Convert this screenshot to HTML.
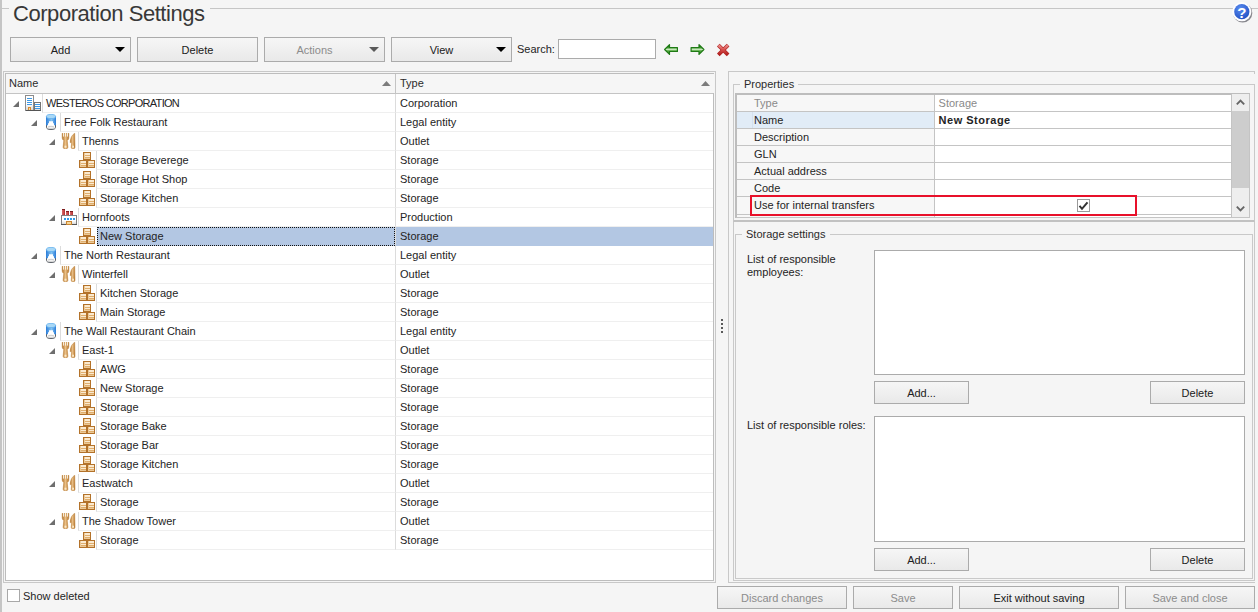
<!DOCTYPE html>
<html lang="en"><head><meta charset="utf-8"><title>Corporation Settings</title>
<style>
*{box-sizing:border-box;margin:0;padding:0}
html,body{width:1258px;height:612px;overflow:hidden}
body{position:relative;background:#f5f5f5;font-family:"Liberation Sans",sans-serif;font-size:11px;color:#242424;line-height:13px}
.abs{position:absolute}
.hl{position:absolute;height:1px;background:#c6c6c6}
.vl{position:absolute;width:1px;background:#c6c6c6}
#title{position:absolute;left:9px;top:0;height:28px;line-height:28px;font-size:22px;letter-spacing:-0.45px;color:#383838;white-space:nowrap}
.btn{position:absolute;border:1px solid #ababab;background:linear-gradient(#f6f6f6,#e9e9e9);text-align:center;white-space:nowrap;color:#202020}
.btn.dis{color:#8c8c8c}
.btn span{position:absolute;left:0;right:0;top:1px;bottom:-1px;display:flex;align-items:center;justify-content:center}
.btn.dd span{right:20px}
.btn .car{position:absolute;right:5px;top:50%;margin-top:-3px;width:0;height:0;border-left:5px solid transparent;border-right:5px solid transparent;border-top:5px solid #000}
.btn.dis .car{border-top-color:#5a5a5a}
.inp{position:absolute;background:#fff;border:1px solid #ababab}
.frame{position:absolute;border:1px solid #c8c8c8}
.tree{position:absolute;left:0;top:0;width:0;height:0}
.row{position:absolute;left:0;width:714px;height:19px}
.row .tri{position:absolute;top:7px;width:0;height:0;border-left:6px solid transparent;border-bottom:6px solid #6e6e6e}
.row .ic{position:absolute;top:1px}
.row .nm,.row .ty{position:absolute;top:0;height:19px;border-left:1px solid #dcdcdc;border-bottom:1px solid #efefef;line-height:18px;padding-left:3px;white-space:nowrap;overflow:hidden}
.row .ty{left:395px;width:318px;padding-left:4px}
.row .up span{letter-spacing:-0.7px}
.row.sel .nm{background:#b3c7e3;border:1px dotted #111;padding-left:2px;line-height:16px;margin-left:1px}
.row.sel .ty{background:#b3c7e3;border-bottom-color:#b3c7e3}
.hdr{position:absolute;top:74px;height:19px;line-height:19px;color:#2b2b2b;white-space:nowrap}
.sort{position:absolute;width:9px;height:5px;background:#7c7c7c;clip-path:polygon(50% 0,100% 100%,0 100%)}
.gb{position:absolute;border:1px solid #c9c9c9}
.gbt{position:absolute;background:#f5f5f5;padding:0 4px;height:13px;line-height:13px;white-space:nowrap;color:#2b2b2b}
.prow{position:absolute;left:737px;width:494px;height:17px;border-bottom:1px solid #c4c4c4;background:#fff}
.prow .k{position:absolute;left:0;top:0;width:198px;height:16px;background:#f7f7f7;border-right:1px solid #c4c4c4;padding-left:17px;line-height:16px;white-space:nowrap}
.prow .v{position:absolute;left:198px;top:0;right:0;height:16px;padding-left:3.600px;line-height:16px;white-space:nowrap}
.lbl{position:absolute;white-space:nowrap;line-height:13px}
.chk{position:absolute;width:13px;height:13px;border:1px solid #8e8e8e;background:#fff}

</style></head>
<body>
<svg width="0" height="0" style="position:absolute">
<defs>
<linearGradient id="gw" x1="0" y1="0" x2="0" y2="1"><stop offset="0.55" stop-color="#ffffff"/><stop offset="1" stop-color="#d4d4d4"/></linearGradient>
<linearGradient id="gc" x1="0" y1="0" x2="1" y2="0"><stop offset="0" stop-color="#2b7cd8"/><stop offset="0.55" stop-color="#86c4f2"/><stop offset="1" stop-color="#2b7cd8"/></linearGradient>
<linearGradient id="gf" x1="0" y1="0" x2="1" y2="0"><stop offset="0" stop-color="#b4732a"/><stop offset="0.5" stop-color="#e9bf86"/><stop offset="1" stop-color="#b4732a"/></linearGradient>
<linearGradient id="gr" x1="0" y1="0" x2="1" y2="0"><stop offset="0" stop-color="#d86a6a"/><stop offset="1" stop-color="#b23030"/></linearGradient>
<symbol id="i-corp" viewBox="0 0 16 16"><g shape-rendering="crispEdges"><rect x="0.5" y="0.5" width="8" height="15" fill="url(#gw)" stroke="#8c8c8c"/><rect x="9.5" y="7.5" width="6" height="8" fill="url(#gw)" stroke="#747474"/><path d="M1 15.500H16" stroke="#555"/><g fill="#3c98e6"><rect x="2" y="3" width="5" height="1"/><rect x="2" y="5" width="5" height="1"/><rect x="2" y="7" width="5" height="1"/><rect x="2" y="9" width="5" height="1"/><rect x="10" y="9" width="5" height="1"/><rect x="10" y="11" width="5" height="1"/><rect x="10" y="13" width="5" height="1"/></g><rect x="3" y="12" width="3" height="3" fill="#d98a2b"/><rect x="4" y="13" width="1" height="2" fill="#f8d9a0"/></g></symbol>
<symbol id="i-legal" viewBox="0 0 16 16"><path d="M3.500 3 V13.300 Q3.500 15.500 8 15.500 Q12.500 15.500 12.500 13.300 V3 Z" fill="#fff" stroke="#5c6168"/><ellipse cx="8" cy="13.300" rx="3.200" ry="1" fill="none" stroke="#b8b8b8" stroke-width="0.700"/><path d="M3 2.500 V11.200 H5 V9.200 H6 V7.200 H10 V9.200 H11 V11.200 H13 V2.500 Z" fill="url(#gc)"/><ellipse cx="8" cy="2.500" rx="4.600" ry="2.100" fill="#a9d8f6" stroke="#62b0ee" stroke-width="0.800"/></symbol>
<symbol id="i-outlet" viewBox="0 0 16 16"><path d="M1.200 0.300 H7.800 V5 Q7.800 6.800 6.200 7.300 L6.900 14.300 Q6.900 15.800 4.500 15.800 Q2.100 15.800 2.100 14.300 L2.800 7.300 Q1.200 6.800 1.200 5 Z" fill="url(#gf)" stroke="#b97a2e" stroke-width="0.500"/><g fill="#fbf6ee"><rect x="2.100" y="0" width="0.900" height="3.600"/><rect x="4.050" y="0" width="0.900" height="3.600"/><rect x="6" y="0" width="0.900" height="3.600"/></g><path d="M13.700 0.200 Q9.300 3 9.200 9.600 H10.700 L10.200 14.300 Q10.200 15.800 12.100 15.800 Q14 15.800 14 14.300 Z" fill="url(#gf)" stroke="#b97a2e" stroke-width="0.500"/><rect x="3.500" y="12.700" width="2" height="2" fill="#fbe8c8"/><rect x="11.200" y="12.700" width="1.800" height="2" fill="#fbe8c8"/></symbol>
<symbol id="i-stor" viewBox="0 0 16 16"><g shape-rendering="crispEdges"><g fill="#fbead0" stroke="#b3722a"><rect x="4.500" y="0.500" width="7" height="7"/><rect x="0.500" y="8.500" width="7" height="7"/><rect x="8.500" y="8.500" width="7" height="7"/></g><g fill="#dfae6e"><rect x="6" y="3" width="5" height="1"/><rect x="6" y="5" width="5" height="1"/><rect x="2" y="11" width="5" height="1"/><rect x="2" y="13" width="5" height="1"/><rect x="10" y="11" width="5" height="1"/><rect x="10" y="13" width="5" height="1"/></g><g fill="#ecc996"><rect x="5" y="1" width="1" height="6"/><rect x="1" y="9" width="1" height="6"/><rect x="9" y="9" width="1" height="6"/><rect x="5" y="6" width="6" height="1"/><rect x="1" y="14" width="6" height="1"/><rect x="9" y="14" width="6" height="1"/></g></g></symbol>
<symbol id="i-prod" viewBox="0 0 16 16"><g shape-rendering="crispEdges"><g fill="url(#gr)"><rect x="1" y="0" width="3" height="6"/><rect x="5" y="2" width="3" height="4"/><rect x="9" y="2" width="3" height="4"/></g><g fill="#7e1c1c"><rect x="1" y="0" width="3" height="1"/><rect x="5" y="2" width="3" height="1"/><rect x="9" y="2" width="3" height="1"/></g><rect x="0.500" y="6.500" width="15" height="9" fill="url(#gw)" stroke="#808080"/><path d="M0 15.500H16" stroke="#555"/><g fill="#2f9be8"><rect x="3" y="9" width="2" height="2"/><rect x="6" y="9" width="2" height="2"/><rect x="9" y="9" width="2" height="2"/><rect x="12" y="9" width="2" height="2"/></g><rect x="5.500" y="12.500" width="5" height="3" fill="#f6d695" stroke="#c98430"/></g></symbol>
</defs></svg>
<div class="vl" style="left:0;top:0;width:2px;height:612px;background:#c5c5c5"></div>
<div class="hl" style="left:2px;top:8px;width:1256px"></div>
<div id="title"><span style="background:#f5f5f5;padding:0 5px 0 4px;display:inline-block;height:28px">Corporation Settings</span></div>
<svg class="abs" style="left:1230px;top:0px" width="26" height="26" viewBox="0 0 26 26"><defs><radialGradient id="hg" cx="0.4" cy="0.3" r="0.8"><stop offset="0" stop-color="#5a8cf0"/><stop offset="1" stop-color="#1c4cc0"/></radialGradient></defs><circle cx="12.700" cy="12.900" r="9.600" fill="#3c3c46" opacity="0.600"/><circle cx="11.800" cy="11.700" r="9.600" fill="#fdfdff"/><circle cx="11.800" cy="11.700" r="7.600" fill="url(#hg)"/><text x="11.900" y="17.600" font-family="Liberation Sans, sans-serif" font-weight="bold" font-size="15" fill="#fff" text-anchor="middle">?</text></svg>

<div class="btn dd" style="left:10px;top:37px;width:121px;height:25px"><span>Add</span><i class="car"></i></div>
<div class="btn" style="left:137px;top:37px;width:121px;height:25px"><span>Delete</span></div>
<div class="btn dd dis" style="left:264px;top:37px;width:121px;height:25px"><span>Actions</span><i class="car"></i></div>
<div class="btn dd" style="left:391px;top:37px;width:121px;height:25px"><span>View</span><i class="car"></i></div>
<div class="lbl" style="left:517px;top:43px">Search:</div>
<div class="inp" style="left:558px;top:39px;width:98px;height:20px"></div>
<svg class="abs" style="left:660px;top:40px" width="76" height="20" viewBox="0 0 76 20"><defs><linearGradient id="ga" x1="0" y1="0" x2="0" y2="1"><stop offset="0" stop-color="#2f8a22"/><stop offset="0.3" stop-color="#3f9a30"/><stop offset="0.5" stop-color="#c6e6bb"/><stop offset="0.62" stop-color="#5fb04c"/><stop offset="1" stop-color="#1f7a15"/></linearGradient><linearGradient id="gx" gradientUnits="userSpaceOnUse" x1="0" y1="4" x2="0" y2="16"><stop offset="0" stop-color="#f0a3a0"/><stop offset="0.45" stop-color="#d9524f"/><stop offset="1" stop-color="#a81414"/></linearGradient></defs>
<path d="M4.600 9.500 L9.500 4.600 V7.500 H17.400 V11.500 H9.500 V14.400 Z" fill="url(#ga)" stroke="#1f7a15" stroke-width="1.200" stroke-linejoin="round"/>
<path d="M43.900 9.500 L39 4.600 V7.500 H31.100 V11.500 H39 V14.400 Z" fill="url(#ga)" stroke="#1f7a15" stroke-width="1.200" stroke-linejoin="round"/>
<g stroke="#b22222" stroke-width="3.700" stroke-linecap="butt"><path d="M58.300 5.100 L68.100 14.900"/><path d="M68.100 5.100 L58.300 14.900"/></g><g stroke="url(#gx)" stroke-width="2.400" stroke-linecap="butt"><path d="M58.600 5.400 L67.800 14.600"/><path d="M67.800 5.400 L58.600 14.600"/></g></svg>

<div class="frame" style="left:3px;top:71px;width:713px;height:512px"></div>
<div class="frame" style="left:5px;top:73px;width:709px;height:508px;background:#fff;border-color:#bdbdbd"></div>
<div class="abs" style="left:6px;top:74px;width:708px;height:19px;background:#f6f6f6"></div>
<div class="hl" style="left:6px;top:93px;width:707px;background:#c4c4c4"></div>
<div class="vl" style="left:395px;top:74px;height:19px;background:#c4c4c4"></div>
<div class="hdr" style="left:9px">Name</div>
<div class="hdr" style="left:400px">Type</div>
<i class="sort" style="left:382px;top:81px"></i>
<i class="sort" style="left:701px;top:81px"></i>

<div class="chk" style="left:7px;top:589px;border-color:#a8a8a8"></div>
<div class="lbl" style="left:23px;top:590px">Show deleted</div>
<div class="tree">
<div class="row" style="top:94px"><i class="tri" style="left:13px"></i><svg class="ic" style="left:25px" width="16" height="16"><use href="#i-corp"/></svg><div class="nm up" style="left:42px;width:353px"><span>WESTEROS CORPORATION</span></div><div class="ty"><span>Corporation</span></div></div>
<div class="row" style="top:113px"><i class="tri" style="left:31px"></i><svg class="ic" style="left:43px" width="16" height="16"><use href="#i-legal"/></svg><div class="nm" style="left:60px;width:335px"><span>Free Folk Restaurant</span></div><div class="ty"><span>Legal entity</span></div></div>
<div class="row" style="top:132px"><i class="tri" style="left:49px"></i><svg class="ic" style="left:61px" width="16" height="16"><use href="#i-outlet"/></svg><div class="nm" style="left:78px;width:317px"><span>Thenns</span></div><div class="ty"><span>Outlet</span></div></div>
<div class="row" style="top:151px"><svg class="ic" style="left:79px" width="16" height="16"><use href="#i-stor"/></svg><div class="nm" style="left:96px;width:299px"><span>Storage Beverege</span></div><div class="ty"><span>Storage</span></div></div>
<div class="row" style="top:170px"><svg class="ic" style="left:79px" width="16" height="16"><use href="#i-stor"/></svg><div class="nm" style="left:96px;width:299px"><span>Storage Hot Shop</span></div><div class="ty"><span>Storage</span></div></div>
<div class="row" style="top:189px"><svg class="ic" style="left:79px" width="16" height="16"><use href="#i-stor"/></svg><div class="nm" style="left:96px;width:299px"><span>Storage Kitchen</span></div><div class="ty"><span>Storage</span></div></div>
<div class="row" style="top:208px"><i class="tri" style="left:49px"></i><svg class="ic" style="left:61px" width="16" height="16"><use href="#i-prod"/></svg><div class="nm" style="left:78px;width:317px"><span>Hornfoots</span></div><div class="ty"><span>Production</span></div></div>
<div class="row sel" style="top:227px"><svg class="ic" style="left:79px" width="16" height="16"><use href="#i-stor"/></svg><div class="nm" style="left:96px;width:298px"><span>New Storage</span></div><div class="ty"><span>Storage</span></div></div>
<div class="row" style="top:246px"><i class="tri" style="left:31px"></i><svg class="ic" style="left:43px" width="16" height="16"><use href="#i-legal"/></svg><div class="nm" style="left:60px;width:335px"><span>The North Restaurant</span></div><div class="ty"><span>Legal entity</span></div></div>
<div class="row" style="top:265px"><i class="tri" style="left:49px"></i><svg class="ic" style="left:61px" width="16" height="16"><use href="#i-outlet"/></svg><div class="nm" style="left:78px;width:317px"><span>Winterfell</span></div><div class="ty"><span>Outlet</span></div></div>
<div class="row" style="top:284px"><svg class="ic" style="left:79px" width="16" height="16"><use href="#i-stor"/></svg><div class="nm" style="left:96px;width:299px"><span>Kitchen Storage</span></div><div class="ty"><span>Storage</span></div></div>
<div class="row" style="top:303px"><svg class="ic" style="left:79px" width="16" height="16"><use href="#i-stor"/></svg><div class="nm" style="left:96px;width:299px"><span>Main Storage</span></div><div class="ty"><span>Storage</span></div></div>
<div class="row" style="top:322px"><i class="tri" style="left:31px"></i><svg class="ic" style="left:43px" width="16" height="16"><use href="#i-legal"/></svg><div class="nm" style="left:60px;width:335px"><span>The Wall Restaurant Chain</span></div><div class="ty"><span>Legal entity</span></div></div>
<div class="row" style="top:341px"><i class="tri" style="left:49px"></i><svg class="ic" style="left:61px" width="16" height="16"><use href="#i-outlet"/></svg><div class="nm" style="left:78px;width:317px"><span>East-1</span></div><div class="ty"><span>Outlet</span></div></div>
<div class="row" style="top:360px"><svg class="ic" style="left:79px" width="16" height="16"><use href="#i-stor"/></svg><div class="nm" style="left:96px;width:299px"><span>AWG</span></div><div class="ty"><span>Storage</span></div></div>
<div class="row" style="top:379px"><svg class="ic" style="left:79px" width="16" height="16"><use href="#i-stor"/></svg><div class="nm" style="left:96px;width:299px"><span>New Storage</span></div><div class="ty"><span>Storage</span></div></div>
<div class="row" style="top:398px"><svg class="ic" style="left:79px" width="16" height="16"><use href="#i-stor"/></svg><div class="nm" style="left:96px;width:299px"><span>Storage</span></div><div class="ty"><span>Storage</span></div></div>
<div class="row" style="top:417px"><svg class="ic" style="left:79px" width="16" height="16"><use href="#i-stor"/></svg><div class="nm" style="left:96px;width:299px"><span>Storage Bake</span></div><div class="ty"><span>Storage</span></div></div>
<div class="row" style="top:436px"><svg class="ic" style="left:79px" width="16" height="16"><use href="#i-stor"/></svg><div class="nm" style="left:96px;width:299px"><span>Storage Bar</span></div><div class="ty"><span>Storage</span></div></div>
<div class="row" style="top:455px"><svg class="ic" style="left:79px" width="16" height="16"><use href="#i-stor"/></svg><div class="nm" style="left:96px;width:299px"><span>Storage Kitchen</span></div><div class="ty"><span>Storage</span></div></div>
<div class="row" style="top:474px"><i class="tri" style="left:49px"></i><svg class="ic" style="left:61px" width="16" height="16"><use href="#i-outlet"/></svg><div class="nm" style="left:78px;width:317px"><span>Eastwatch</span></div><div class="ty"><span>Outlet</span></div></div>
<div class="row" style="top:493px"><svg class="ic" style="left:79px" width="16" height="16"><use href="#i-stor"/></svg><div class="nm" style="left:96px;width:299px"><span>Storage</span></div><div class="ty"><span>Storage</span></div></div>
<div class="row" style="top:512px"><i class="tri" style="left:49px"></i><svg class="ic" style="left:61px" width="16" height="16"><use href="#i-outlet"/></svg><div class="nm" style="left:78px;width:317px"><span>The Shadow Tower</span></div><div class="ty"><span>Outlet</span></div></div>
<div class="row" style="top:531px"><svg class="ic" style="left:79px" width="16" height="16"><use href="#i-stor"/></svg><div class="nm" style="left:96px;width:299px"><span>Storage</span></div><div class="ty"><span>Storage</span></div></div>
</div>
<!-- splitter dots -->
<div class="abs" style="left:721px;top:319px;width:2px;height:14px;background:repeating-linear-gradient(#595959 0,#595959 2px,transparent 2px,transparent 4px)"></div>

<!-- right panel frame -->
<div class="vl" style="left:728px;top:71px;height:512px;background:#c8c8c8"></div>
<div class="hl" style="left:728px;top:71px;width:527px;background:#c8c8c8"></div>
<div class="hl" style="left:728px;top:582px;width:527px;background:#c8c8c8"></div>
<div class="vl" style="left:1254px;top:71px;height:3px;background:#c8c8c8"></div>

<!-- properties group box -->
<div class="gb" style="left:733px;top:84px;width:522px;height:138px;border-bottom:2px solid #c2c2c2"></div>
<div class="gbt" style="left:740px;top:78px">Properties</div>
<!-- property grid -->
<div class="abs" style="left:735px;top:93px;width:515px;height:125px;background:#fff;border:1px solid #c4c4c4;border-left:2px solid #bdbdbd;border-top:2px solid #bdbdbd"></div>
<div class="prow" style="top:95px;color:#8a8a8a"><div class="k">Type</div><div class="v">Storage</div></div>
<div class="prow" style="top:112px"><div class="k" style="background:#e1ecf7"><i class="vl" style="left:15px;top:0;height:16px;background:#d5e1ee"></i>Name</div><div class="v" style="font-weight:bold;letter-spacing:0.5px">New Storage</div></div>
<div class="prow" style="top:129px"><div class="k">Description</div><div class="v"></div></div>
<div class="prow" style="top:146px"><div class="k">GLN</div><div class="v"></div></div>
<div class="prow" style="top:163px"><div class="k">Actual address</div><div class="v"></div></div>
<div class="prow" style="top:180px"><div class="k">Code</div><div class="v"></div></div>
<div class="prow" style="top:197px;height:18px"><div class="k" style="height:17px;line-height:17px">Use for internal transfers</div><div class="v" style="height:17px"></div></div>
<div class="prow" style="top:215px;height:2px;border-bottom:0"><div class="k" style="height:2px"></div></div>
<!-- checkbox -->
<div class="chk" style="left:1077px;top:199px;border-color:#9a9a9a"></div>
<svg class="abs" style="left:1077px;top:199px" width="13" height="13" viewBox="0 0 13 13"><path d="M2.500 6.800 L5 9.800 L10.500 3.300" fill="none" stroke="#333" stroke-width="2" stroke-linecap="butt"/></svg>
<!-- scrollbar -->
<div class="abs" style="left:1231px;top:94px;width:18px;height:123px;background:#eeeeee;border-left:1px solid #c4c4c4"></div>
<div class="abs" style="left:1232px;top:111px;width:17px;height:77px;background:#cdcdcd"></div>
<svg class="abs" style="left:1232px;top:95px" width="17" height="16" viewBox="0 0 17 16"><path d="M4.800 9.300 L8.500 5.600 L12.200 9.300" fill="none" stroke="#666" stroke-width="1.900"/></svg>
<svg class="abs" style="left:1232px;top:201px" width="17" height="16" viewBox="0 0 17 16"><path d="M4.800 5.700 L8.500 9.400 L12.200 5.700" fill="none" stroke="#666" stroke-width="1.900"/></svg>
<!-- red highlight -->
<div class="abs" style="left:750px;top:195px;width:387px;height:21px;border:2px solid #e8102a"></div>

<!-- storage settings -->
<div class="vl" style="left:733px;top:222px;height:359px;background:#c9c9c9"></div>
<div class="vl" style="left:1254px;top:222px;height:359px;background:#c9c9c9"></div>
<div class="hl" style="left:733px;top:580px;width:522px;background:#c9c9c9"></div>
<div class="gb" style="left:735px;top:234px;width:518px;height:345px"></div>
<div class="gbt" style="left:742px;top:228px">Storage settings</div>
<div class="lbl" style="left:747px;top:253px">List of responsible<br>employees:</div>
<div class="inp" style="left:874px;top:250px;width:371px;height:125px"></div>
<div class="btn" style="left:874px;top:381px;width:95px;height:23px"><span>Add...</span></div>
<div class="btn" style="left:1150px;top:381px;width:95px;height:23px"><span>Delete</span></div>
<div class="lbl" style="left:747px;top:419px">List of responsible roles:</div>
<div class="inp" style="left:874px;top:416px;width:371px;height:126px"></div>
<div class="btn" style="left:874px;top:548px;width:95px;height:23px"><span>Add...</span></div>
<div class="btn" style="left:1150px;top:548px;width:95px;height:23px"><span>Delete</span></div>

<!-- bottom buttons -->
<div class="btn dis" style="left:717px;top:586px;width:130px;height:23px"><span>Discard changes</span></div>
<div class="btn dis" style="left:853px;top:586px;width:100px;height:23px"><span>Save</span></div>
<div class="btn" style="left:959px;top:586px;width:160px;height:23px"><span>Exit without saving</span></div>
<div class="btn dis" style="left:1125px;top:586px;width:130px;height:23px"><span>Save and close</span></div>
</body></html>
